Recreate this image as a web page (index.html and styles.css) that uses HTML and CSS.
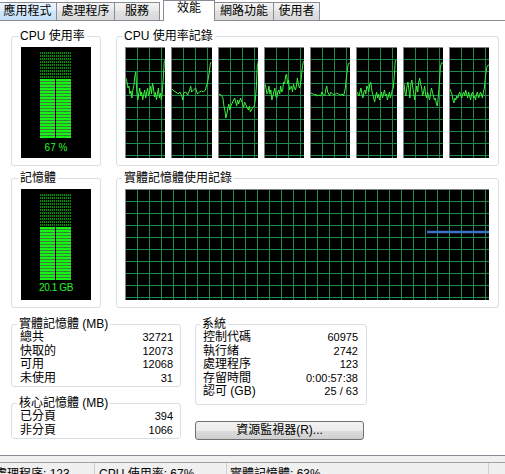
FILE: index.html
```html
<!DOCTYPE html>
<html lang="zh-Hant">
<head>
<meta charset="utf-8">
<title>Windows 工作管理員 - 效能</title>
<link rel="stylesheet" href="styles.css">
</head>
<body>
<nav class="tabs">
  <div class="tab hover t1">應用程式</div>
  <div class="tab t2">處理程序</div>
  <div class="tab t3">服務</div>
  <div class="tab sel">效能</div>
  <div class="tab t5">網路功能</div>
  <div class="tab t6">使用者</div>
</nav>
<main class="panel">
  <div class="row row1">
    <fieldset class="group meterbox">
      <legend>CPU 使用率</legend>
      <div class="meter">
        <div class="bars">
          <div class="col"><div class="dim"></div><div class="lit" style="height:59px"></div></div>
          <div class="col"><div class="dim"></div><div class="lit" style="height:59px"></div></div>
        </div>
        <div class="meter-val">67 %</div>
      </div>
    </fieldset>
    <fieldset class="group histbox">
      <legend>CPU 使用率記錄</legend>
      <div class="cpugraphs">
        <div class="graph"><svg viewBox="0 0 40 110" preserveAspectRatio="none"><polyline class="cpu" points="0,30 1,34 2,40 3,38 4,46 5,43 6,50 7,42 8,38 9,28 10,24 11,44 12,52 13,46 14,40 15,48 16,44 17,52 18,47 19,42 20,50 21,45 22,40 23,48 24,44 25,38 26,46 27,35 28,40 29,49 30,44 31,52 32,46 33,40 34,50 35,45 36,52 37,44 38,30 39,14 40,12"/></svg></div>
        <div class="graph"><svg viewBox="0 0 40 110" preserveAspectRatio="none"><polyline class="cpu" points="0,41 2,43 4,44 6,46 8,44 10,48 11,52 12,45 14,44 16,47 18,42 19,38 20,44 22,42 24,40 26,46 28,44 30,43 32,44 34,42 35,38 36,36 37,30 38,24 39,16 40,14"/></svg></div>
        <div class="graph"><svg viewBox="0 0 40 110" preserveAspectRatio="none"><polyline class="cpu" points="0,46 2,47 4,50 5,58 6,62 7,70 8,66 9,60 10,56 11,62 12,58 14,54 16,50 18,58 19,52 20,56 22,50 24,56 25,60 26,54 28,58 30,62 31,58 32,64 34,60 36,58 37,52 38,40 39,18 40,14"/></svg></div>
        <div class="graph"><svg viewBox="0 0 40 110" preserveAspectRatio="none"><polyline class="cpu" points="0,36 1,40 2,46 3,44 4,38 5,46 6,42 7,52 8,48 9,44 10,40 11,48 12,50 13,44 14,42 15,46 16,38 17,44 18,42 19,34 20,36 21,28 22,26 23,36 24,32 25,42 26,40 27,38 28,44 29,36 30,40 31,42 32,38 33,30 34,36 35,40 36,38 37,30 38,20 39,14 40,13"/></svg></div>
        <div class="graph"><svg viewBox="0 0 40 110" preserveAspectRatio="none"><polyline class="cpu" points="0,45 2,46 4,47 5,46 6,48 8,47 10,48 11,44 12,46 14,48 15,42 16,38 17,44 18,46 19,48 20,44 22,46 24,47 26,45 28,46 30,47 32,46 33,48 34,45 35,40 36,30 37,22 38,16 39,15 40,15"/></svg></div>
        <div class="graph"><svg viewBox="0 0 40 110" preserveAspectRatio="none"><polyline class="cpu" points="0,44 1,46 2,48 3,44 4,40 5,46 6,50 7,44 8,42 9,46 10,38 11,40 12,44 13,36 14,34 15,42 16,46 17,50 18,54 19,48 20,44 21,50 22,46 23,52 24,48 25,44 26,50 27,46 28,42 29,48 30,46 31,52 32,48 33,44 34,50 35,46 36,42 37,40 38,28 39,13 40,12"/></svg></div>
        <div class="graph"><svg viewBox="0 0 40 110" preserveAspectRatio="none"><polyline class="cpu" points="0,36 1,44 2,48 3,38 4,34 5,42 6,50 7,36 8,32 9,40 10,46 11,52 12,44 13,38 14,44 15,34 16,30 17,36 18,40 19,48 20,44 21,38 22,46 23,50 24,44 25,48 26,52 27,46 28,40 29,44 30,48 31,52 32,50 33,56 34,58 35,48 36,36 37,20 38,15 40,15"/></svg></div>
        <div class="graph"><svg viewBox="0 0 40 110" preserveAspectRatio="none"><polyline class="cpu" points="0,41 1,44 2,46 3,52 4,55 5,50 6,52 7,48 8,50 9,46 10,44 11,48 12,50 13,46 14,44 15,48 16,42 17,46 18,50 19,44 20,48 21,52 22,46 23,44 24,50 25,48 26,52 27,46 28,44 29,50 30,48 31,44 32,46 33,50 34,44 35,40 36,30 37,22 38,18 39,17 40,17"/></svg></div>
      </div>
    </fieldset>
  </div>

  <div class="row row2">
    <fieldset class="group meterbox">
      <legend>記憶體</legend>
      <div class="meter">
        <div class="bars">
          <div class="col"><div class="dim"></div><div class="lit" style="height:53px"></div></div>
          <div class="col"><div class="dim"></div><div class="lit" style="height:53px"></div></div>
        </div>
        <div class="meter-val mem">20.1 GB</div>
      </div>
    </fieldset>
    <fieldset class="group histbox">
      <legend>實體記憶體使用記錄</legend>
      <div class="graph memgraph"><svg viewBox="0 0 363 110" preserveAspectRatio="none"><line class="memline" x1="301" y1="42" x2="363" y2="42"/></svg></div>
    </fieldset>
  </div>

  <div class="row3">
    <div class="stack">
      <fieldset class="group info phys">
        <legend>實體記憶體 (MB)</legend>
        <div class="kv"><span>總共</span><span class="num">32721</span></div>
        <div class="kv"><span>快取的</span><span class="num">12073</span></div>
        <div class="kv"><span>可用</span><span class="num">12068</span></div>
        <div class="kv"><span>未使用</span><span class="num">31</span></div>
      </fieldset>
      <fieldset class="group info kernel">
        <legend>核心記憶體 (MB)</legend>
        <div class="kv"><span>已分頁</span><span class="num">394</span></div>
        <div class="kv"><span>非分頁</span><span class="num">1066</span></div>
      </fieldset>
    </div>
    <div class="stack">
      <fieldset class="group info sys">
        <legend>系統</legend>
        <div class="kv"><span>控制代碼</span><span class="num">60975</span></div>
        <div class="kv"><span>執行緒</span><span class="num">2742</span></div>
        <div class="kv"><span>處理程序</span><span class="num">123</span></div>
        <div class="kv"><span>存留時間</span><span class="num">0:00:57:38</span></div>
        <div class="kv"><span>認可 (GB)</span><span class="num">25 / 63</span></div>
      </fieldset>
      <button class="btn" type="button">資源監視器(R)...</button>
    </div>
  </div>
</main>
<div class="strip"></div>
<footer class="status">
  <div class="pane p1">處理程序: 123</div>
  <div class="pane p2">CPU 使用率: 67%</div>
  <div class="pane p3">實體記憶體: 63%</div>
  <div class="pane p4"></div>
</footer>
</body>
</html>
```
FILE: styles.css
```css
* { box-sizing: border-box; }

html, body {
  margin: 0;
  width: 505px;
  height: 474px;
  overflow: hidden;
}

body {
  background: #fff;
  color: #000;
  font: 12px/14px "Liberation Sans", "Noto Sans CJK TC", sans-serif;
}

/* ---------- tabs ---------- */
.tabs {
  display: flex;
  align-items: flex-end;
  height: 21px;
  border-bottom: 1px solid #898c95;
  background: #fff;
}

.tab {
  height: 18px;
  display: flex;
  align-items: center;
  justify-content: center;
  border: 1px solid #898c95;
  border-bottom: 0;
  margin-left: -1px;
  background: linear-gradient(#f5f5f5, #e8e8e8 50%, #e0e0e0 50%, #dadada);
  line-height: 14px;
  white-space: nowrap;
  padding-bottom: 1px;
}

.t1 { width: 59px; margin-left: -2px; }
.t2 { width: 59px; }
.t3 { width: 46px; }
.t5 { width: 60px; }
.t6 { width: 47px; }

.tab.hover {
  background: linear-gradient(#eaf5fd, #dcedfb 50%, #cfe6f9 50%, #c6e1f8);
}

.tab.sel {
  width: 52px;
  height: 21px;
  margin-left: 3px;
  margin-bottom: -1px;
  background: #fff;
  align-items: flex-start;
  padding-top: 0;
  position: relative;
  z-index: 1;
}

/* ---------- panel ---------- */
.panel {
  height: 435px;
  padding: 8px 6px 0 11px;
  background: #fff;
  border-bottom: 1px solid #898c95;
}

.row {
  display: grid;
  grid-template-columns: 90px 383px;
  column-gap: 15px;
}

.row2 { margin-top: 5px; }

.group {
  margin: 0;
  min-width: 0;
  border: 1px solid #d5dfe5;
  border-radius: 3px;
}

.group legend {
  padding: 0 2px;
  margin-left: -3px;
  line-height: 14px;
  font-size: 12px;
}

.meterbox { padding: 4px 9px 7px; }
.histbox { padding: 4px 9px 7px 8px; }

/* ---------- meters ---------- */
.meter {
  height: 111px;
  background: #000;
  padding-top: 5px;
  display: flex;
  flex-direction: column;
  align-items: center;
}

.bars {
  display: flex;
  gap: 1px;
  height: 86px;
  margin-left: -2px;
}

.col {
  width: 15px;
  display: flex;
  flex-direction: column;
}

.dim {
  flex: 1;
  background:
    repeating-linear-gradient(to bottom, transparent 0 2px, #000 2px 3px),
    repeating-linear-gradient(to right, #0f8a0f 0 1px, #002800 1px 2px);
}

.lit {
  background: repeating-linear-gradient(to bottom, #14f514 0 2px, #3f7d3f 2px 3px);
}

.meter-val {
  margin-top: 5px;
  color: #2af22a;
  font-size: 10px;
  line-height: 10px;
  white-space: nowrap;
}

.meter-val.mem {
  margin-top: 3px;
  letter-spacing: -0.4px;
}

/* ---------- graphs ---------- */
.cpugraphs {
  display: grid;
  grid-template-columns: repeat(8, 1fr);
  column-gap: 6px;
}

.graph {
  height: 111px;
  background-color: #000;
  background-image:
    linear-gradient(to right, #1f8a4c 1px, transparent 1px),
    linear-gradient(to bottom, #1f8a4c 1px, transparent 1px);
  background-size: 12px 12px;
  background-position: 11px 11px;
  border-top: 1px solid #808080;
  border-left: 1px solid #808080;
}

.graph svg {
  display: block;
  width: 100%;
  height: 100%;
}

.cpu {
  fill: none;
  stroke: #3cf03c;
  stroke-width: 1;
  vector-effect: non-scaling-stroke;
}

.memline {
  stroke: #3a73c6;
  stroke-width: 2.5;
  vector-effect: non-scaling-stroke;
}

/* ---------- info boxes ---------- */
.row3 {
  display: grid;
  grid-template-columns: 170px 172px;
  column-gap: 14px;
  margin-top: 10px;
  align-items: start;
}

.stack {
  display: flex;
  flex-direction: column;
}

.info legend { line-height: 13px; }

.phys { padding: 0 7px 1px 8px; }
.kernel { padding: 0 7px 1px 8px; margin-top: 10px; }
.sys { padding: 0 8px 5px 7px; }

.kv {
  display: flex;
  justify-content: space-between;
  line-height: 13.5px;
  white-space: nowrap;
}

.num { font-size: 11px; }

.btn {
  margin-top: 16px;
  height: 19px;
  width: 169px;
  padding: 0;
  border: 1px solid #707070;
  border-radius: 3px;
  background: linear-gradient(#f2f2f2, #ebebeb 50%, #dddddd 50%, #cfcfcf);
  font: 12px/14px "Liberation Sans", "Noto Sans CJK TC", sans-serif;
  color: #000;
}

/* ---------- status bar ---------- */
.strip {
  height: 6px;
  background: #f0f0f0;
}

.status {
  display: flex;
  height: 20px;
  background: #f0f0f0;
  border-top: 1px solid #a0a0a0;
}

.pane {
  padding-top: 4px;
  white-space: nowrap;
  border-right: 1px solid #d0d0d0;
}

.p1 { width: 95px; text-indent: -5px; }
.p2 { width: 132px; padding-left: 4px; }
.p3 { width: 262px; padding-left: 3px; }
.p4 { flex: 1; border-right: 0; }
```
